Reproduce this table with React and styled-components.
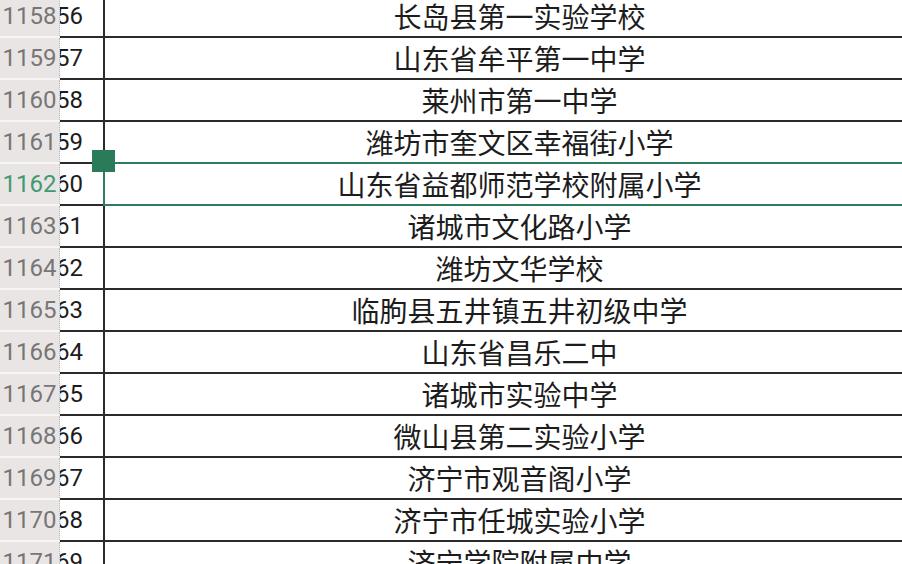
import React from 'react';
import styled, { createGlobalStyle } from 'styled-components';

const GlobalStyle = createGlobalStyle`
  html, body {
    margin: 0;
    padding: 0;
    background: #fff;
    overflow: hidden;
  }
`;

const Sheet = styled.div`
  width: 902px;
  height: 564px;
  overflow: hidden;
`;
const Grid = styled.div`
  display: flex;
  flex-direction: column;
  margin-top: -4px;
`;
const Row = styled.div`
  display: grid;
  grid-template-columns: 60px 45px 829px;
  height: 42px;
`;
const HeaderCell = styled.div`
  display: flex;
  align-items: center;
  justify-content: center;
  border-bottom: 2px solid #f6f4f4;
  border-right: 1px dotted #bdb8b8;
  background: #e9e5e5;
  font-family: Roboto, 'Liberation Sans', sans-serif;
  font-size: 24px;
  color: ${(p) => (p.$active ? '#3f9a72' : '#787575')};
  white-space: nowrap;
`;
const NumCell = styled.div`
  display: flex;
  align-items: center;
  justify-content: flex-end;
  padding-right: 20px;
  border-right: 2px solid #2b2b2b;
  border-bottom: 2px solid #2b2b2b;
  font-family: Roboto, 'Liberation Sans', sans-serif;
  font-size: 24px;
  color: #1c1c1c;
  overflow: hidden;
`;
const NameCell = styled.div`
  position: relative;
  display: flex;
  align-items: center;
  justify-content: center;
  border-bottom: 2px solid #2b2b2b;
  font-family: 'Noto Sans CJK SC', 'Noto Sans', sans-serif;
  font-size: 28px;
  color: #1c1c1c;
  white-space: nowrap;
`;
const Selection = styled.div`
  position: absolute;
  left: -2px;
  top: -2px;
  right: 0;
  bottom: -2px;
  border: 2px solid #2f7d5e;
  border-right: none;
  pointer-events: none;
`;
const Handle = styled.div`
  position: absolute;
  left: -13px;
  top: -14px;
  width: 23px;
  height: 22px;
  background: #2b7a5a;
`;

const schools = [
  '长岛县第一实验学校',
  '山东省牟平第一中学',
  '莱州市第一中学',
  '潍坊市奎文区幸福街小学',
  '山东省益都师范学校附属小学',
  '诸城市文化路小学',
  '潍坊文华学校',
  '临朐县五井镇五井初级中学',
  '山东省昌乐二中',
  '诸城市实验中学',
  '微山县第二实验小学',
  '济宁市观音阁小学',
  '济宁市任城实验小学',
  '济宁学院附属中学',
];

const firstRow = 1158;
const activeRow = 1162;

export default function App() {
  return (
    <Sheet>
      <GlobalStyle />
      <Grid>
        {schools.map((name, i) => {
          const rowNo = firstRow + i;
          const active = rowNo === activeRow;
          return (
            <Row key={rowNo}>
              <HeaderCell $active={active}>{rowNo}</HeaderCell>
              <NumCell>{String(rowNo - 2).slice(-2)}</NumCell>
              <NameCell>
                {name}
                {active && (
                  <Selection>
                    <Handle />
                  </Selection>
                )}
              </NameCell>
            </Row>
          );
        })}
      </Grid>
    </Sheet>
  );
}
